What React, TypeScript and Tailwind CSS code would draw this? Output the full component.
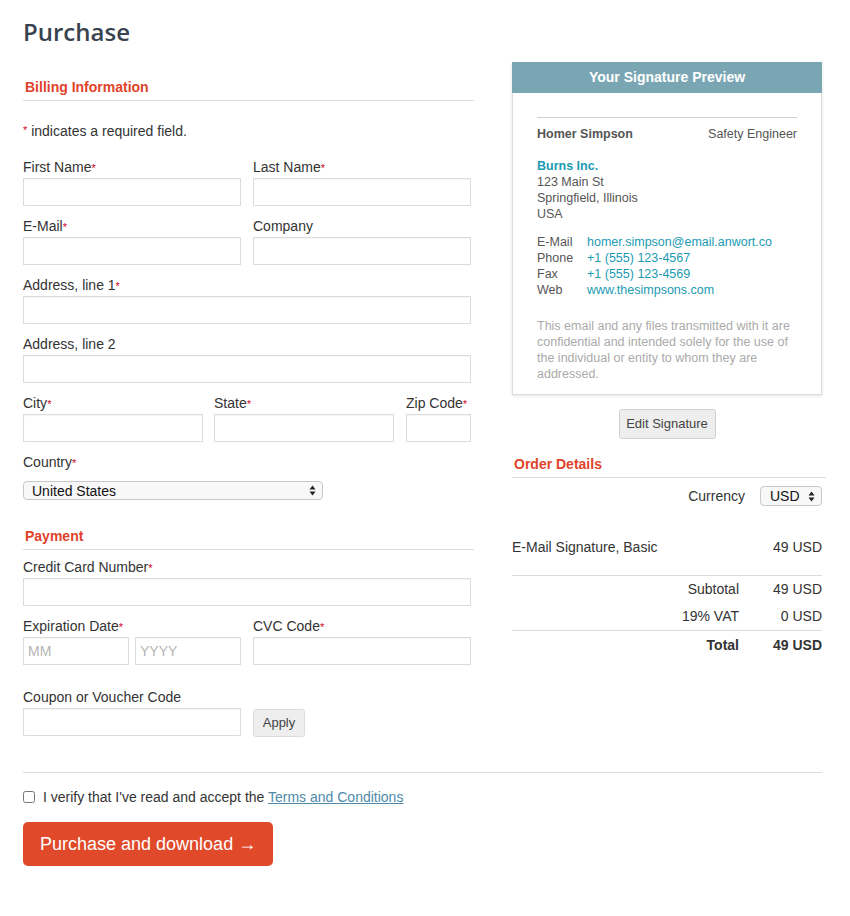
import React from "react";

const font = { fontFamily: '"Liberation Sans", Arial, Helvetica, sans-serif' };

function Req() {
  return <span className="text-[#d0021b] text-[11px] align-top relative top-[1px]">*</span>;
}

function Label({ children, req }: { children: React.ReactNode; req?: boolean }) {
  return (
    <div className="text-[14px] leading-[20px] text-[#333] mb-[1px] whitespace-nowrap">
      {children}
      {req && <Req />}
    </div>
  );
}

function Input({ w, placeholder }: { w?: string; placeholder?: string }) {
  return (
    <input
      placeholder={placeholder}
      className={`h-[28px] border border-[#dcdcdc] bg-white px-[4px] text-[14px] text-[#333] placeholder:text-[#b5b5b5] outline-none shadow-[inset_0_1px_1px_rgba(0,0,0,0.04)] ${w ?? "w-full"}`}
      style={font}
    />
  );
}

function Arrows() {
  return (
    <svg width="7" height="11" viewBox="0 0 7 11" className="shrink-0">
      <path d="M3.5 0.5 L6.5 4.5 L0.5 4.5 Z" fill="#222" />
      <path d="M3.5 10.5 L6.5 6.5 L0.5 6.5 Z" fill="#222" />
    </svg>
  );
}

function FakeSelect({ value, className }: { value: string; className: string }) {
  return (
    <div
      className={`flex items-center justify-between rounded-[4px] border border-[#c8c8c8] bg-[#f8f8f8] pr-[6px] text-[14px] text-[#111] leading-none ${className}`}
    >
      <span>{value}</span>
      <Arrows />
    </div>
  );
}

function SectionHeading({ children }: { children: React.ReactNode }) {
  return (
    <div className="border-b border-[#dcdcdc] pb-[3px] pl-[2px] text-[14px] leading-[20px] font-bold text-[#e0432a]">
      {children}
    </div>
  );
}

export default function App() {
  return (
    <div className="min-h-[916px] w-[850px] bg-white pl-[23px] pt-[14px] text-[#333]" style={font}>
      <h1
        className="text-[24px] leading-[36px] font-semibold text-[#384350]"
        style={{ fontFamily: '"Open Sans", "Liberation Sans", sans-serif' }}
      >
        Purchase
      </h1>

      <div className="flex items-start gap-[38px]">
        {/* Left column */}
        <div className="w-[451px] pt-[27px]">
          <SectionHeading>Billing Information</SectionHeading>
          <div className="mt-[20px] text-[14px] leading-[20px]">
            <span className="text-[#d0021b] text-[11px] relative -top-[2px]">*</span> indicates a required field.
          </div>

          <div className="mt-[15px] w-[448px] flex flex-col gap-[10px]">
            <div className="grid grid-cols-2 gap-x-[12px]">
              <div>
                <Label req>First Name</Label>
                <Input />
              </div>
              <div>
                <Label req>Last Name</Label>
                <Input />
              </div>
            </div>
            <div className="grid grid-cols-2 gap-x-[12px]">
              <div>
                <Label req>E-Mail</Label>
                <Input />
              </div>
              <div>
                <Label>Company</Label>
                <Input />
              </div>
            </div>
            <div>
              <Label req>Address, line 1</Label>
              <Input />
            </div>
            <div>
              <Label>Address, line 2</Label>
              <Input />
            </div>
            <div className="flex gap-[11px]">
              <div className="w-[180px]">
                <Label req>City</Label>
                <Input />
              </div>
              <div className="w-[180px]">
                <Label req>State</Label>
                <Input />
              </div>
              <div className="ml-[1px] w-[65px]">
                <Label req>Zip Code</Label>
                <Input />
              </div>
            </div>
            <div>
              <div className="text-[14px] leading-[20px] mb-[9px]">
                Country
                <Req />
              </div>
              <FakeSelect value="United States" className="h-[19px] w-[300px] pl-[8px]" />
            </div>
          </div>

          <div className="mt-[26px]">
            <SectionHeading>Payment</SectionHeading>
          </div>

          <div className="mt-[7px] w-[448px] flex flex-col">
            <div>
              <Label req>Credit Card Number</Label>
              <Input />
            </div>
            <div className="mt-[10px] grid grid-cols-2 gap-x-[12px]">
              <div>
                <Label req>Expiration Date</Label>
                <div className="flex gap-[6px]">
                  <Input w="w-[106px]" placeholder="MM" />
                  <Input w="w-[106px]" placeholder="YYYY" />
                </div>
              </div>
              <div>
                <Label req>CVC Code</Label>
                <Input />
              </div>
            </div>
            <div className="mt-[22px]">
              <Label>Coupon or Voucher Code</Label>
              <div className="flex gap-[12px] items-start">
                <Input w="w-[218px]" />
                <button className="mt-[1px] h-[28px] w-[52px] rounded-[3px] border border-[#dcdcdc] bg-[#eeeeee] text-[13px] text-[#444]">
                  Apply
                </button>
              </div>
            </div>
          </div>
        </div>

        {/* Right column */}
        <div className="w-[314px] pt-[12px]">
          <div className="w-[310px] border border-[#dddddd] shadow-[0_1px_3px_rgba(0,0,0,0.12)]">
            <div className="-mx-px -mt-px h-[31px] bg-[#7aa6b4] text-center text-[14px] leading-[31px] font-bold text-white">
              Your Signature Preview
            </div>
            <div className="px-[24px] pt-[24px] pb-[12px] text-[12.5px] leading-[16px] text-[#555]">
              <div className="border-t border-[#d0d0d0] pt-[8px] flex justify-between">
                <span className="font-bold">Homer Simpson</span>
                <span>Safety Engineer</span>
              </div>
              <div className="mt-[16px]">
                <div className="font-bold text-[#1b9bb2]">Burns Inc.</div>
                <div>123 Main St</div>
                <div>Springfield, Illinois</div>
                <div>USA</div>
              </div>
              <div className="mt-[12px] grid grid-cols-[50px_1fr]">
                <span>E-Mail</span>
                <span className="text-[#1b9bb2]">homer.simpson@email.anwort.co</span>
                <span>Phone</span>
                <span className="text-[#1b9bb2]">+1 (555) 123-4567</span>
                <span>Fax</span>
                <span className="text-[#1b9bb2]">+1 (555) 123-4569</span>
                <span>Web</span>
                <span className="text-[#1b9bb2]">www.thesimpsons.com</span>
              </div>
              <div className="mt-[20px] text-[#aaaaaa]">
                This email and any files transmitted with it are confidential and intended solely for the use of the
                individual or entity to whom they are addressed.
              </div>
            </div>
          </div>

          <div className="w-[310px] flex justify-center mt-[14px]">
            <button className="h-[30px] w-[97px] rounded-[3px] border border-[#d0d0d0] bg-[#eeeeee] text-[13px] text-[#444]">
              Edit Signature
            </button>
          </div>

          <div className="mt-[15px]">
            <SectionHeading>Order Details</SectionHeading>
          </div>

          <div className="w-[310px] text-[14px] leading-[20px] text-[#333]">
            <div className="mt-[8px] flex items-center justify-end gap-[15px]">
              <span>Currency</span>
              <FakeSelect value="USD" className="h-[20px] w-[62px] pl-[9px]" />
            </div>
            <div className="mt-[31px] flex justify-between border-b border-[#dcdcdc] pb-[18px]">
              <span>E-Mail Signature, Basic</span>
              <span>49 USD</span>
            </div>
            <div className="border-b border-[#dcdcdc] pt-[3px] pb-[4px]">
              <div className="flex">
                <span className="flex-1 text-right">Subtotal</span>
                <span className="w-[83px] text-right">49 USD</span>
              </div>
              <div className="mt-[7px] flex">
                <span className="flex-1 text-right">19% VAT</span>
                <span className="w-[83px] text-right">0 USD</span>
              </div>
            </div>
            <div className="flex pt-[4px] font-bold">
              <span className="flex-1 text-right">Total</span>
              <span className="w-[83px] text-right">49 USD</span>
            </div>
          </div>
        </div>
      </div>

      <div className="mt-[35px] w-[799px] border-t border-[#dcdcdc]" />

      <div className="mt-[14px] flex items-center gap-[8px] text-[14px] leading-[20px]">
        <input type="checkbox" className="h-[12px] w-[12px] m-0" />
        <span>
          I verify that I've read and accept the{" "}
          <a href="#" className="text-[#4d8aa8] underline">
            Terms and Conditions
          </a>
        </span>
      </div>

      <button className="mt-[15px] h-[44px] rounded-[5px] bg-[#e04a2a] px-[17px] text-[18px] text-white">
        Purchase and download →
      </button>
    </div>
  );
}
